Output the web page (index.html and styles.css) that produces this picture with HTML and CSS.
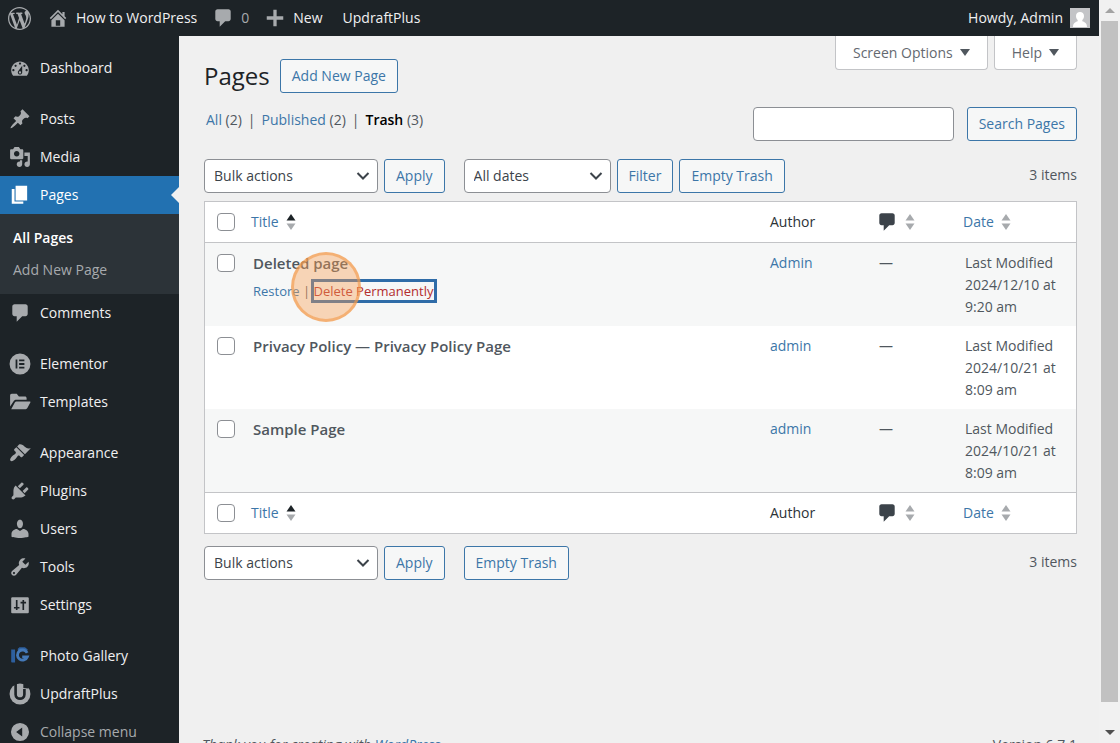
FILE: index.html
```
<!doctype html>
<html lang="en">
  <head>
    <meta charset="UTF-8" />
    <meta name="viewport" content="width=device-width, initial-scale=1.0" />
    <title>Pages</title>
    <link rel="stylesheet" href="styles.css">
  </head>
  <body>
    <svg class="sprite" aria-hidden="true">
      <symbol id="i-comment" viewBox="0 0 20 20"><path d="M5 2h10c1.100 0 2 .9 2 2v7c0 1.100-.9 2-2 2h-3l-5 5v-5H5c-1.100 0-2-.9-2-2V4c0-1.100.9-2 2-2z"/></symbol>
      <symbol id="i-sort" viewBox="0 0 10 16"><path class="up" d="M5 0l4.500 6.500h-9z"/><path class="down" d="M5 16L.5 9.500h9z"/></symbol>
    </svg>

    <div class="screen">
      <div class="app">
        <header class="adminbar">
          <a href="#" class="bar-logo" aria-label="About WordPress">
            <svg class="icon-logo" viewBox="0 0 20 20"><path d="M20 10c0-5.510-4.490-10-10-10C4.480 0 0 4.490 0 10c0 5.520 4.480 10 10 10 5.510 0 10-4.480 10-10zM7.780 15.370L4.370 6.220c.55-.02 1.170-.08 1.170-.08.5-.06.44-1.130-.06-1.110 0 0-1.450.11-2.370.11-.18 0-.37 0-.58-.01C4.120 2.690 6.870 1.110 10 1.110c2.330 0 4.450.87 6.050 2.340-.68-.11-1.650.39-1.650 1.580 0 .74.45 1.360.9 2.100.35.61.55 1.360.55 2.460 0 1.490-1.400 5-1.400 5l-3.030-8.370c.54-.02.82-.17.82-.17.5-.05.44-1.250-.06-1.220 0 0-1.440.12-2.380.12-.87 0-2.330-.12-2.330-.12-.5-.03-.56 1.200-.06 1.220l.92.08 1.260 3.410zM17.410 10c.24-.64.74-1.870.43-4.250.7 1.290 1.050 2.710 1.050 4.250 0 3.290-1.730 6.240-4.400 7.780.97-2.590 1.940-5.200 2.920-7.780zM6.100 18.090C3.120 16.650 1.110 13.530 1.110 10c0-1.300.23-2.480.72-3.590C3.250 10.300 4.670 14.200 6.100 18.090zm4.030-6.630l2.580 6.980c-.86.29-1.760.45-2.710.45-.79 0-1.570-.11-2.290-.33.81-2.380 1.620-4.740 2.420-7.100z"/></svg>
          </a>
          <a href="#" class="bar-site">
            <svg class="icon-bar" viewBox="0 0 20 20"><path fill-rule="evenodd" d="M16 8.500l1.530 1.530-1.060 1.060L10 4.600l-6.470 6.490-1.060-1.060L10 2.500l4 4v-2h2v4zm-6-2.460l6 5.990V18H4v-5.970zM12 17v-5H8v5h4z"/></svg>
            <span>How to WordPress</span>
          </a>
          <a href="#" class="bar-comments">
            <svg class="icon-bar"><use href="#i-comment"/></svg>
            <span>0</span>
          </a>
          <a href="#" class="bar-new">
            <svg class="icon-bar" viewBox="0 0 20 20"><path d="M17.500 8.500v3h-6v6h-3v-6h-6v-3h6v-6h3v6z"/></svg>
            <span>New</span>
          </a>
          <a href="#" class="bar-updraft">UpdraftPlus</a>
          <a href="#" class="bar-account">
            <span>Howdy, Admin</span>
            <svg class="avatar" viewBox="0 0 20 20"><rect width="20" height="20" fill="#c3c4c7"/><path fill="#fff" d="M10 4c2.400 0 4 1.600 4 4 0 1.700-.6 3.200-1.700 4.100v1.200c2.500.7 4.700 2 4.700 5.700H3c0-3.700 2.200-5 4.700-5.700v-1.200C6.600 11.200 6 9.700 6 8c0-2.400 1.600-4 4-4z"/></svg>
          </a>
        </header>

        <div class="columns">
          <nav class="menu" aria-label="Main menu">
            <a href="#" class="item">
              <svg class="icon" viewBox="0 0 20 20"><path fill-rule="evenodd" d="M3.760 17h12.480c1.100-1.370 1.760-3.110 1.760-5 0-4.420-3.580-8-8-8s-8 3.580-8 8c0 1.890.66 3.630 1.760 5zM10 5c.55 0 1 .45 1 1s-.45 1-1 1-1-.45-1-1 .45-1 1-1zM6 7c.55 0 1 .45 1 1s-.45 1-1 1-1-.45-1-1 .45-1 1-1zm8 0c.55 0 1 .45 1 1s-.45 1-1 1-1-.45-1-1 .45-1 1-1zm-5.370 5.550L12 8v6c0 1.100-.9 2-2 2s-2-.9-2-2c0-.57.24-1.080.63-1.450zM4 11c.55 0 1 .45 1 1s-.45 1-1 1-1-.45-1-1 .45-1 1-1zm12 0c.55 0 1 .45 1 1s-.45 1-1 1-1-.45-1-1 .45-1 1-1zm-5 3c0-.55-.45-1-1-1s-1 .45-1 1 .45 1 1 1 1-.45 1-1z"/></svg>
              Dashboard
            </a>
            <a href="#" class="item first">
              <svg class="icon" viewBox="0 0 20 20"><path d="M10.440 3.020l1.820-1.820 6.360 6.350-1.830 1.820c-1.050-.68-2.480-.57-3.410.36l-.75.75c-.92.93-1.040 2.350-.35 3.410l-1.830 1.820-2.410-2.410-2.800 2.790c-.42.42-3.380 2.710-3.800 2.290s1.860-3.390 2.280-3.810l2.790-2.790L4.100 9.360l1.830-1.820c1.050.69 2.480.57 3.400-.36l.75-.75c.93-.92 1.050-2.350.36-3.410z"/></svg>
              Posts
            </a>
            <a href="#" class="item">
              <svg class="icon" viewBox="0 0 20 20"><path fill-rule="evenodd" d="M13 11V4c0-.55-.45-1-1-1h-1.670L9 1H5L3.670 3H2c-.55 0-1 .45-1 1v7c0 .55.45 1 1 1h10c.55 0 1-.45 1-1zM7 4.500c1.380 0 2.500 1.120 2.500 2.500S8.380 9.500 7 9.500 4.500 8.380 4.500 7 5.620 4.500 7 4.500zM14 6h5v10.500c0 1.380-1.120 2.500-2.500 2.500S14 17.880 14 16.500s1.120-2.500 2.500-2.500c.17 0 .34.02.5.05V9h-3V6zm-4 8.050V13h2v3.500c0 1.380-1.120 2.500-2.500 2.500S7 17.880 7 16.500 8.120 14 9.500 14c.17 0 .34.02.5.05z"/></svg>
              Media
            </a>
            <a href="#" class="item current">
              <svg class="icon" viewBox="0 0 20 20"><path d="M6 15V1.500h10.500V15H6zm-1 1h8v2H2.500V4.500H5V16z"/></svg>
              Pages
            </a>
            <div class="submenu">
              <a href="#" class="active">All Pages</a>
              <a href="#">Add New Page</a>
            </div>
            <a href="#" class="item">
              <svg class="icon"><use href="#i-comment"/></svg>
              Comments
            </a>
            <a href="#" class="item first">
              <svg class="icon" viewBox="0 0 20 20"><path fill-rule="evenodd" d="M10 .5a9.500 9.500 0 1 1 0 19 9.500 9.500 0 0 1 0-19zM6 6v8h1.600V6zM9.200 6v1.600H14V6zm0 3.200v1.600H14V9.200zm0 3.200V14H14v-1.600z"/></svg>
              Elementor
            </a>
            <a href="#" class="item">
              <svg class="icon" viewBox="0 0 20 20"><path d="M1 14V4c0-.8.6-1.500 1.500-1.500H7L9 5h5.500c.8 0 1.500.6 1.500 1.500V8H6.500c-1 0-1.800.5-2.300 1.300zM2 16.500l3.300-6c.3-.6.800-1 1.500-1h12c.6 0 .9.500.6 1l-2.700 5c-.3.6-.8 1-1.500 1z"/></svg>
              Templates
            </a>
            <a href="#" class="item first">
              <svg class="icon" viewBox="0 0 20 20"><path d="M14.480 11.060L7.410 3.990l1.500-1.500c.5-.56 2.300-.47 3.510.32 1.210.8 1.430 1.280 2.910 2.100 1.180.64 2.450 1.260 4.450.85zm-.71.71L6.700 4.700 4.930 6.470c-.39.39-.39 1.020 0 1.410l1.060 1.060c.39.39.39 1.030 0 1.420-.6.600-1.430 1.110-2.210 1.690-.35.26-.7.53-1.010.84C1.430 14.230.4 16.080 1.400 17.070c.99 1 2.840-.03 4.180-1.360.31-.31.58-.66.85-1.020.57-.78 1.080-1.610 1.690-2.210.39-.39 1.020-.39 1.410 0l1.060 1.060c.39.39 1.020.39 1.410 0z"/></svg>
              Appearance
            </a>
            <a href="#" class="item">
              <svg class="icon" viewBox="0 0 20 20"><path d="M13.110 4.360L9.870 7.600 8 5.730l3.240-3.240c.35-.34 1.050-.2 1.560.32.52.51.66 1.210.31 1.550zm-8 1.770l.91-1.120 9.010 9.010-1.190.84c-.71.71-2.630 1.160-3.820 1.160H6.140L4.900 17.260c-.59.59-1.540.59-2.120 0-.59-.58-.59-1.530 0-2.120l1.240-1.240v-3.880c0-1.130.4-3.190 1.090-3.890zm7.260 3.970l3.240-3.240c.34-.35 1.040-.21 1.550.31.52.51.66 1.210.31 1.550l-3.240 3.250z"/></svg>
              Plugins
            </a>
            <a href="#" class="item">
              <svg class="icon" viewBox="0 0 20 20"><path d="M10 9.250c-2.270 0-2.730-3.440-2.730-3.440C7 4.020 7.820 1.500 9.970 1.500c2.160 0 2.980 2.520 2.710 4.310 0 0-.41 3.440-2.680 3.440zm0 2.570L12.720 10c2.790 0 5.020 2.330 5.020 4.530v2.490s-3.650 1.130-7.740 1.130c-4.150 0-7.740-1.130-7.740-1.130v-2.490c0-2.250 2.240-4.480 4.970-4.480z"/></svg>
              Users
            </a>
            <a href="#" class="item">
              <svg class="icon" viewBox="0 0 20 20"><path fill-rule="evenodd" d="M16.680 9.770c-1.340 1.340-3.300 1.670-4.950.99l-5.410 6.520c-.99.99-2.590.99-3.580 0s-.99-2.590 0-3.570l6.520-5.420c-.68-1.650-.35-3.610.99-4.950 1.280-1.280 3.120-1.620 4.720-1.060l-2.890 2.890 2.820 2.820 2.860-2.870c.53 1.580.18 3.390-1.080 4.650zM3.810 16.210c.4.390 1.040.39 1.430 0 .4-.4.400-1.040 0-1.430-.39-.4-1.030-.4-1.430 0-.39.39-.39 1.030 0 1.430z"/></svg>
              Tools
            </a>
            <a href="#" class="item">
              <svg class="icon" viewBox="0 0 20 20"><rect x="2" y="3" width="16" height="14.500" rx="1"/><path class="cut" d="M7 5.500v9M4.500 12.500h5M13 5.500v9M10.500 7.800h5"/></svg>
              Settings
            </a>
            <a href="#" class="item first">
              <svg class="icon" viewBox="0 0 20 20"><path fill="#2d5f9e" d="M2 4h3.500v12H3c-.6 0-1-.4-1-1zM8 3.500L9.500 2h5L17 4v1H8z"/><path fill="none" stroke="#4479b8" stroke-width="2.600" d="M16.500 7.200A4.600 4.600 0 1 0 16.600 10.800H12"/></svg>
              Photo Gallery
            </a>
            <a href="#" class="item">
              <svg class="icon" viewBox="0 0 20 20"><circle cx="10" cy="10" r="9.500"/><path fill="none" stroke="#1d2327" stroke-width="2.400" d="M6 1v9.500c0 5 8 5 8 0V5.500"/><path fill="#1d2327" d="M13 0h2l3.500 3.500-1 1.500L13 4.500z"/></svg>
              UpdraftPlus
            </a>
            <button type="button" class="item collapse">
              <svg class="icon" viewBox="0 0 20 20"><path fill-rule="evenodd" d="M10 1.800a8.200 8.200 0 1 1 0 16.400 8.200 8.200 0 0 1 0-16.400zM6.500 10l5.500 4V6z"/></svg>
              Collapse menu
            </button>
          </nav>

          <main class="content">
            <div class="screen-meta">
              <button type="button">Screen Options <i class="caret"></i></button>
              <button type="button">Help <i class="caret"></i></button>
            </div>

            <div class="heading">
              <h1>Pages</h1>
              <a href="#" class="button">Add New Page</a>
            </div>

            <div class="filters">
              <ul class="views">
                <li><a href="#">All</a> (2)</li>
                <li><a href="#">Published</a> (2)</li>
                <li><a href="#" class="current">Trash</a> (3)</li>
              </ul>
              <form class="search">
                <input type="search" aria-label="Search Pages" />
                <button type="button" class="button">Search Pages</button>
              </form>
            </div>

            <div class="tablenav">
              <select class="bulk" aria-label="Select bulk action"><option>Bulk actions</option></select>
              <button type="button" class="button">Apply</button>
              <select class="dates group" aria-label="Filter by date"><option>All dates</option></select>
              <button type="button" class="button">Filter</button>
              <button type="button" class="button">Empty Trash</button>
              <span class="count">3 items</span>
            </div>

            <table class="pages">
              <thead>
                <tr>
                  <th class="check"><input type="checkbox" aria-label="Select all" /></th>
                  <th class="sortable"><a href="#">Title <svg class="sort asc"><use href="#i-sort"/></svg></a></th>
                  <th class="author">Author</th>
                  <th class="comments"><a href="#" aria-label="Comments"><svg class="bubble"><use href="#i-comment"/></svg><svg class="sort"><use href="#i-sort"/></svg></a></th>
                  <th class="date sortable"><a href="#">Date <svg class="sort"><use href="#i-sort"/></svg></a></th>
                </tr>
              </thead>
              <tbody>
                <tr>
                  <td class="check"><input type="checkbox" aria-label="Select Deleted page" /></td>
                  <td>
                    <strong>Deleted page</strong>
                    <div class="actions">
                      <a href="#">Restore</a> | <span class="delete"><a href="#">Delete Permanently</a><i class="click-marker"></i></span>
                    </div>
                  </td>
                  <td><a href="#">Admin</a></td>
                  <td>—</td>
                  <td>Last Modified<br />2024/12/10 at<br />9:20 am</td>
                </tr>
                <tr>
                  <td class="check"><input type="checkbox" aria-label="Select Privacy Policy" /></td>
                  <td><strong>Privacy Policy — Privacy Policy Page</strong></td>
                  <td><a href="#">admin</a></td>
                  <td>—</td>
                  <td>Last Modified<br />2024/10/21 at<br />8:09 am</td>
                </tr>
                <tr>
                  <td class="check"><input type="checkbox" aria-label="Select Sample Page" /></td>
                  <td><strong>Sample Page</strong></td>
                  <td><a href="#">admin</a></td>
                  <td>—</td>
                  <td>Last Modified<br />2024/10/21 at<br />8:09 am</td>
                </tr>
              </tbody>
              <tfoot>
                <tr>
                  <th class="check"><input type="checkbox" aria-label="Select all" /></th>
                  <th class="sortable"><a href="#">Title <svg class="sort asc"><use href="#i-sort"/></svg></a></th>
                  <th>Author</th>
                  <th class="comments"><a href="#" aria-label="Comments"><svg class="bubble"><use href="#i-comment"/></svg><svg class="sort"><use href="#i-sort"/></svg></a></th>
                  <th class="sortable"><a href="#">Date <svg class="sort"><use href="#i-sort"/></svg></a></th>
                </tr>
              </tfoot>
            </table>

            <div class="tablenav bottom">
              <select class="bulk" aria-label="Select bulk action"><option>Bulk actions</option></select>
              <button type="button" class="button">Apply</button>
              <button type="button" class="button group">Empty Trash</button>
              <span class="count">3 items</span>
            </div>

            <footer class="credits">
              <em>Thank you for creating with <a href="#">WordPress</a>.</em>
              <span>Version 6.7.1</span>
            </footer>
          </main>
        </div>
      </div>

      <div class="scrollbar" aria-hidden="true">
        <i class="arrow-up"></i>
        <div class="track"><div class="thumb"></div></div>
        <i class="arrow-down"></i>
      </div>
    </div>
  </body>
</html>
```

FILE: styles.css
```
* {
  box-sizing: border-box;
}
body {
  margin: 0;
  background: #f0f0f0;
  color: #50575e;
  font: 14px/22px "Segoe UI", "Open Sans", sans-serif;
}
a {
  color: #3c76a8;
  text-decoration: none;
}
button,
input,
select {
  font: inherit;
}
svg {
  fill: currentColor;
  flex: none;
}
.sprite {
  position: absolute;
  width: 0;
  height: 0;
}
.screen {
  display: flex;
  height: 100vh;
  overflow: hidden;
}
.app {
  flex: 1;
  min-width: 0;
  display: flex;
  flex-direction: column;
}

/* top bar */
.adminbar {
  display: flex;
  align-items: center;
  flex: none;
  height: 36px;
  padding: 0 9px 0 8px;
  background: #1d2327;
}
.adminbar a {
  display: flex;
  align-items: center;
  color: #f0f0f1;
}
.adminbar svg {
  color: #a7aaad;
}
.icon-logo {
  width: 23px;
  height: 23px;
}
.icon-bar {
  width: 22px;
  height: 22px;
  margin-right: 7px;
}
.bar-site {
  margin-left: 16px;
}
.adminbar .bar-comments {
  margin-left: 15px;
  color: #a7aaad;
}
.bar-new {
  margin-left: 15px;
}
.bar-updraft {
  margin-left: 20px;
}
.adminbar .bar-account {
  margin-left: auto;
  gap: 7px;
}
.avatar {
  width: 20px;
  height: 20px;
}

/* side menu */
.columns {
  display: flex;
  flex: 1;
  min-height: 0;
}
.menu {
  flex: none;
  width: 179px;
  padding-top: 13px;
  background: #1d2327;
}
.item {
  position: relative;
  display: flex;
  align-items: center;
  gap: 9px;
  width: 100%;
  height: 38px;
  padding: 0 9px;
  color: #f0f0f1;
}
.item.first {
  margin-top: 13px;
}
.icon {
  width: 22px;
  height: 22px;
  color: #a7aaad;
}
.cut {
  fill: none;
  stroke: #1d2327;
  stroke-width: 1.5;
}
.item.current {
  background: #2271b1;
}
.item.current,
.item.current .icon {
  color: #fff;
}
.item.current::after {
  content: "";
  position: absolute;
  right: 0;
  border: 8px solid transparent;
  border-left: 0;
  border-right-color: #f0f0f0;
}
.submenu {
  padding: 8px 13px;
  background: #2c3338;
}
.submenu a {
  display: block;
  line-height: 32px;
  color: #a7aaad;
}
.submenu .active {
  color: #fff;
  font-weight: 600;
}
.collapse {
  border: 0;
  background: none;
  color: #a7aaad;
}

/* content */
.content {
  flex: 1;
  min-width: 0;
  padding: 0 22px 0 25px;
}
.screen-meta {
  float: right;
  display: flex;
  gap: 6px;
}
.screen-meta button {
  display: flex;
  align-items: center;
  gap: 7px;
  height: 34px;
  padding: 0 17px;
  border: 1px solid #c3c4c7;
  border-top: 0;
  border-radius: 0 0 4px 4px;
  background: #fff;
  color: #646970;
}
.caret {
  border: 5px solid transparent;
  border-top: 7px solid #50575e;
  border-bottom: 0;
}
.heading {
  display: flex;
  align-items: center;
  gap: 10px;
  padding-top: 23px;
}
h1 {
  margin: 0;
  color: #1d2327;
  font-size: 24px;
  font-weight: 400;
  line-height: 34px;
}
.button {
  height: 34px;
  padding: 0 11px;
  border: 1px solid #3c76a8;
  border-radius: 3px;
  background: #f6f7f7;
  color: #3c76a8;
  line-height: 32px;
  white-space: nowrap;
}
.filters {
  display: flex;
  justify-content: space-between;
  margin-top: 14px;
}
.views {
  display: flex;
  margin: 0;
  padding: 2px;
  list-style: none;
}
.views li + li::before {
  content: "|";
  margin: 0 6px;
}
.views .current {
  color: #000;
  font-weight: 600;
}
.search {
  display: flex;
  gap: 13px;
}
.search input,
select {
  height: 34px;
  border: 1px solid #8c8f94;
  border-radius: 4px;
  background: #fff;
}
.search input {
  width: 201px;
}
select {
  appearance: none;
  padding: 0 28px 0 9px;
  color: #3c434a;
  background: #fff url('data:image/svg+xml,<svg xmlns="http://www.w3.org/2000/svg" viewBox="0 0 14 10"><path d="M1.500 2L7 7.500 12.500 2" fill="none" stroke="%233c434a" stroke-width="2"/></svg>') no-repeat right 7px center / 14px 10px;
}
.tablenav {
  display: flex;
  gap: 6px;
  margin: 18px 0 8px;
}
.tablenav.bottom {
  margin-top: 12px;
}
.bulk {
  width: 174px;
}
.dates {
  width: 147px;
}
.tablenav .group {
  margin-left: 13px;
}
.count {
  margin-left: auto;
  line-height: 32px;
}

/* list table */
.pages {
  width: 100%;
  table-layout: fixed;
  border: 1px solid #c3c4c7;
  border-spacing: 0;
  background: #fff;
}
.pages th,
.pages td {
  padding: 9px 10px 8px;
  text-align: left;
  vertical-align: top;
  font-weight: 400;
}
.pages th {
  height: 41px;
  color: #2c3338;
}
.pages .sortable {
  padding-left: 8px;
}
.pages thead th {
  border-bottom: 1px solid #c3c4c7;
}
.pages tfoot th {
  border-top: 1px solid #c3c4c7;
}
.pages tbody tr:nth-child(odd) {
  background: #f6f7f7;
}
.pages .check {
  width: 38px;
  padding: 11px 0 0 12px;
}
.author {
  width: 109px;
}
.pages .comments {
  width: 86px;
  padding-right: 0;
}
.date {
  width: 121px;
}
.pages th a {
  display: flex;
  align-items: center;
  gap: 7px;
}
.pages .comments a {
  gap: 10px;
  color: #3c434a;
}
.bubble {
  width: 22px;
  height: 22px;
  margin: 0 -3px;
}
.sort {
  width: 10px;
  height: 16px;
  color: #a7aaad;
}
.sort.asc {
  --up: #1d2327;
}
.up {
  fill: var(--up, #a7aaad);
}
.pages input {
  appearance: none;
  display: block;
  width: 18px;
  height: 18px;
  margin: 0;
  border: 1px solid #8c8f94;
  border-radius: 4px;
  background: #fff;
}
strong {
  font-size: 15px;
  font-weight: 600;
}
.actions {
  margin-top: 5px;
  font-size: 13px;
}
.delete {
  position: relative;
}
.delete a {
  color: #b32d2e;
  outline: 3px solid #2f6ca8;
}
.click-marker {
  position: absolute;
  left: -23px;
  top: -30px;
  width: 70px;
  height: 70px;
  border: 3px solid rgba(242, 153, 74, 0.6);
  border-radius: 50%;
  background: rgba(249, 160, 85, 0.4);
}

.credits {
  display: flex;
  justify-content: space-between;
  margin: 154px 0 0 -2px;
}

/* window scroll bar */
.scrollbar {
  display: flex;
  flex-direction: column;
  align-items: center;
  flex: none;
  width: 21px;
  padding: 8px 0;
  background: #f1f1f1;
}
.arrow-up {
  border: 5px solid transparent;
  border-bottom-color: #a3a3a3;
  border-top: 0;
}
.arrow-down {
  border: 5px solid transparent;
  border-top-color: #505050;
  border-bottom: 0;
}
.track {
  flex: 1;
  width: 17px;
  margin: 8px 0 7px;
}
.thumb {
  height: 97%;
  background: #c1c1c1;
}
```
